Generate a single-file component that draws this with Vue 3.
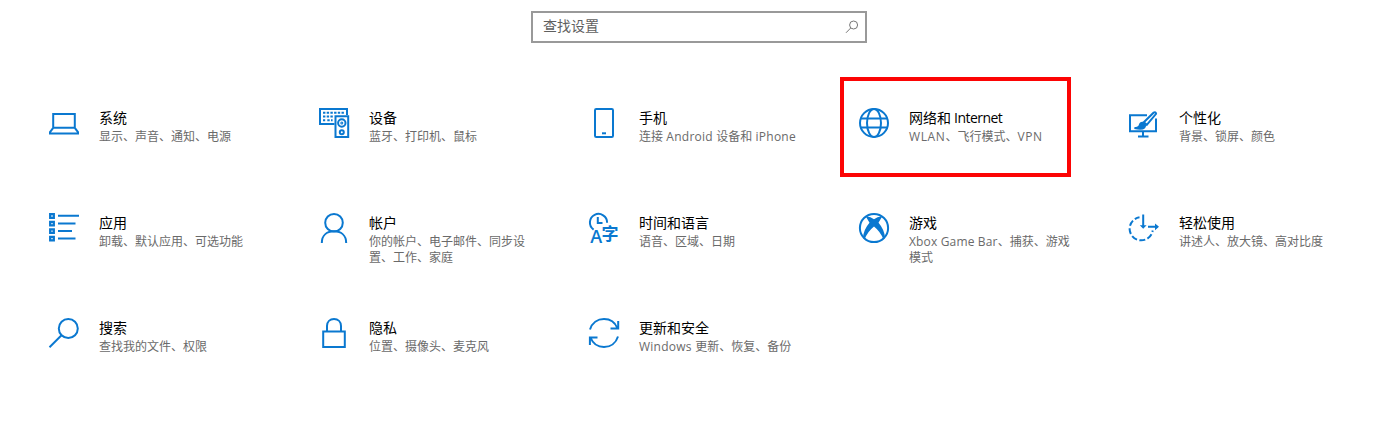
<script setup>
const items = [
  { icon: 'system', title: '系统', lines: ['显示、声音、通知、电源'] },
  { icon: 'devices', title: '设备', lines: ['蓝牙、打印机、鼠标'] },
  { icon: 'phone', title: '手机', lines: ['连接 Android 设备和 iPhone'], tracking: 0.24 },
  { icon: 'network', title: '网络和 Internet', lines: ['WLAN、飞行模式、VPN'], tracking: 0.6, marked: true },
  { icon: 'personal', title: '个性化', lines: ['背景、锁屏、颜色'] },
  { icon: 'apps', title: '应用', lines: ['卸载、默认应用、可选功能'] },
  { icon: 'account', title: '帐户', lines: ['你的帐户、电子邮件、同步设', '置、工作、家庭'] },
  { icon: 'time', title: '时间和语言', lines: ['语音、区域、日期'] },
  { icon: 'gaming', title: '游戏', lines: ['Xbox Game Bar、捕获、游戏', '模式'], tracking: 0.16 },
  { icon: 'ease', title: '轻松使用', lines: ['讲述人、放大镜、高对比度'] },
  { icon: 'search', title: '搜索', lines: ['查找我的文件、权限'] },
  { icon: 'privacy', title: '隐私', lines: ['位置、摄像头、麦克风'] },
  { icon: 'update', title: '更新和安全', lines: ['Windows 更新、恢复、备份'], tracking: 0.25 },
]

// Splits a string into Latin and Chinese runs, so that only Latin runs are tracked.
const runs = (text) =>
  text.split(/([ A-Za-z]+)/).filter(Boolean).map((t) => ({ t, latin: /[A-Za-z ]/.test(t) }))
</script>

<template>
  <main class="settings">
    <div class="search">
      <span>查找设置</span>
      <svg class="lens" viewBox="0 0 14 14"><circle cx="8.6" cy="5" r="4" /><path d="M5.7 8 1 12.8" /></svg>
    </div>
    <div class="grid">
      <div v-for="it in items" :key="it.icon" class="item">
        <svg class="icon" viewBox="0 0 30 30">
          <g v-if="it.icon === 'system'">
            <path d="M4.2 6H25.8V19.8H4.2ZM4.2 19.8 1 24.2V25.6H29V24.2L25.8 19.8" />
          </g>
          <g v-else-if="it.icon === 'devices'">
            <path d="M15.5 16H1V1H28V7" />
            <path d="M4 4.8H26M4 8.6H15M4 12.3H6.2M8.3 12.3H13.6" stroke-dasharray="2.4 1.3" />
            <path d="M16.5 8.3H29.2V29H16.5Z" />
            <circle cx="22.8" cy="15" r="3.7" />
            <circle cx="22.8" cy="15" r="0.5" class="solid" />
            <circle cx="22.8" cy="24.2" r="2" />
          </g>
          <g v-else-if="it.icon === 'phone'">
            <rect x="6" y="1" width="18" height="28" rx="1.3" />
            <path d="M13 25.3H17" />
          </g>
          <g v-else-if="it.icon === 'network'">
            <circle cx="15" cy="15" r="14" />
            <ellipse cx="15" cy="15" rx="7" ry="14" />
            <path d="M2 10.6H28M2 19.5H28" />
          </g>
          <g v-else-if="it.icon === 'personal'">
            <path d="M18 7.2H1V23.2H27V10.5M14 23.2V28.2M9 28.6H19.5" />
            <path d="M14.8 14.2 24.6 4.7Q26.8 3.6 27.1 5.8L17.8 16.8Z" />
            <path d="M5.5 20Q9.8 20 10.7 17.2Q11.6 14.3 14.5 15Q17.2 17.2 15.3 19.5Q13 21.8 5.5 20Z" class="solid" />
          </g>
          <g v-else-if="it.icon === 'apps'">
            <path d="M1.2 1.2H4.8V4.8H1.2ZM1.2 8.8H4.8V12.4H1.2ZM1.2 16.3H4.8V19.9H1.2ZM1.2 23.8H4.8V27.4H1.2Z" class="heavy" />
            <path d="M9 2.8H30M9 10.4H26.5M9 17.9H23M9 25.5H26.5" />
          </g>
          <g v-else-if="it.icon === 'account'">
            <circle cx="15" cy="9.8" r="8.8" />
            <path d="M2.8 30C2.8 22 8.2 18.3 15 18.3S27.2 22 27.2 30" />
          </g>
          <g v-else-if="it.icon === 'time'">
            <path d="M4.6 16.6A8.6 8.6 0 1 1 18.1 9.8" />
            <path d="M8.8 4V10H13.5" />
            <text x="1.3" y="30" class="latin">A</text>
            <text x="12.4" y="26.8" class="hanzi">字</text>
          </g>
          <g v-else-if="it.icon === 'gaming'">
            <circle cx="15" cy="15" r="14.1" />
            <path d="M7 3.7Q10.5 3 15 6.3Q19.5 3 23 3.7L19.5 9.8Q25.2 16.3 26 24.6L24.4 26.2Q21.3 18.4 15 13.4Q8.7 18.4 5.6 26.2L4 24.6Q4.8 16.3 10.5 9.8Z" class="fill" />
          </g>
          <g v-else-if="it.icon === 'ease'">
            <path d="M10.5 4.3A11.6 11.6 0 1 0 23.7 17.5" stroke-dasharray="6 2.4" stroke-dashoffset="1" />
            <path d="M14.2 1.5V13.7M19 13.8H28.5" />
            <path d="M10.8 12.2H17.6L14.2 15.8ZM26 10.4 30 13.8 26 17.2Z" class="fill" />
          </g>
          <g v-else-if="it.icon === 'search'">
            <circle cx="19.3" cy="10.5" r="9.5" />
            <path d="M12.5 17.3.5 29.3" />
          </g>
          <g v-else-if="it.icon === 'privacy'">
            <path d="M4.2 13.5H25.8V29H4.2ZM8 13.5V8C8 3.8 11 1 15 1S22 3.8 22 8V13.5" />
          </g>
          <g v-else>
            <path d="M1 11.5C3 5 8.5 1 15 1C21 1 26 4.3 28.3 10M29.2 3V10.5H21.5" />
            <path d="M29 18.5C27 25 21.5 29 15 29C9 29 4 25.7 1.7 20M.9 27V19.5H8.5" />
          </g>
        </svg>
        <div class="text">
          <div class="title"><span v-for="(r, i) in runs(it.title)" :key="i" :class="{ tight: r.latin }">{{ r.t }}</span></div>
          <div v-for="line in it.lines" :key="line" class="desc"><span
            v-for="(r, i) in runs(line)" :key="i" :style="r.latin ? { letterSpacing: it.tracking + 'px' } : null">{{ r.t }}</span></div>
        </div>
        <div v-if="it.marked" class="mark"></div>
      </div>
    </div>
  </main>
</template>

<style>
body {
  background: #fff;
}
</style>

<style scoped>
.settings {
  box-sizing: border-box;
  height: 447px;
  padding-top: 11px;
  overflow: hidden;
  font-family: "Open Sans", "Noto Sans CJK SC", sans-serif;
}
.search {
  box-sizing: border-box;
  display: flex;
  align-items: center;
  justify-content: space-between;
  width: 336px;
  height: 32px;
  margin-left: 531px;
  padding: 0 6px 2px 10px;
  border: 2px solid #999;
  color: #5f5f5f;
  font-size: 14px;
  line-height: 20px;
}
.lens {
  width: 14px;
  height: 14px;
  margin-top: 1px;
  fill: none;
  stroke: #777;
  stroke-width: 1;
}
.grid {
  display: grid;
  grid-template-columns: repeat(5, 270px);
  grid-auto-rows: 105px;
  margin: 65px 0 0 49px;
  width: 1343px;
}
.item {
  position: relative;
  display: flex;
  align-items: flex-start;
  gap: 20px;
}
.icon {
  flex: none;
  width: 30px;
  height: 30px;
  overflow: visible;
  fill: none;
  stroke: #0a78d0;
  stroke-width: 2;
}
.heavy {
  stroke-width: 2.3;
}
.solid,
.fill {
  fill: #0a78d0;
}
.fill {
  stroke: none;
}
.latin,
.hanzi {
  fill: #0a78d0;
  stroke: none;
  font-family: "Open Sans", "Noto Sans CJK SC", sans-serif;
  font-weight: 600;
  font-size: 18px;
}
.hanzi {
  font-size: 17px;
  font-weight: 700;
}
.text {
  white-space: pre;
}
.title {
  height: 21px;
  color: #000;
  font-size: 14px;
  line-height: 20px;
}
.tight {
  letter-spacing: -0.55px;
}
.desc {
  height: 16px;
  color: #6a6a6a;
  font-size: 12px;
  line-height: 16px;
}
.mark {
  position: absolute;
  box-sizing: border-box;
  left: -19px;
  top: -31px;
  width: 231px;
  height: 100px;
  border: 4px solid #fc0404;
}
</style>
